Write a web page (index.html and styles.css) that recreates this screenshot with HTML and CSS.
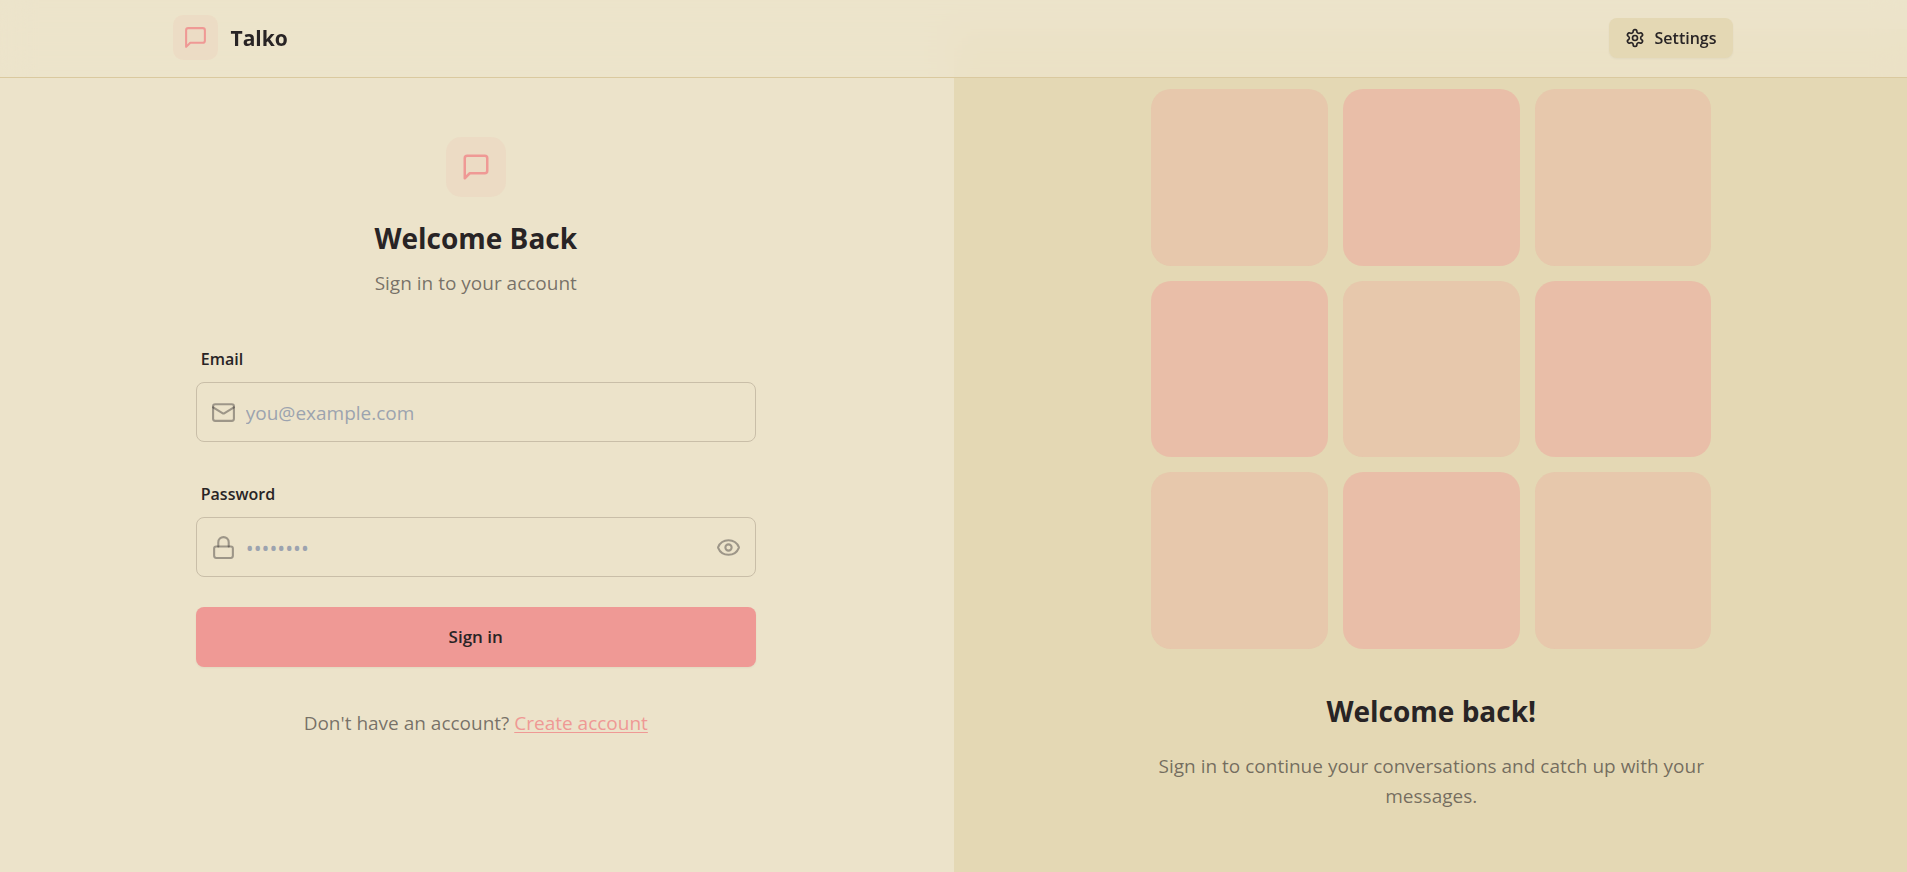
FILE: index.html
```html
<!DOCTYPE html>
<html lang="en">
<head>
<meta charset="utf-8">
<meta name="viewport" content="width=device-width, initial-scale=1">
<title>Talko</title>
<link rel="stylesheet" href="styles.css">
</head>
<body>
<header class="topbar">
  <div class="topbar-inner">
    <a class="brand" href="#">
      <span class="brand-mark"><svg class="icon" viewBox="0 0 24 24"><path d="M21 15a2 2 0 0 1-2 2H7l-4 4V5a2 2 0 0 1 2-2h14a2 2 0 0 1 2 2z"/></svg></span>
      <span class="brand-name">Talko</span>
    </a>
    <button class="settings" type="button">
      <svg class="icon icon-small" viewBox="0 0 24 24"><path d="M12.22 2h-.44a2 2 0 0 0-2 2v.18a2 2 0 0 1-1 1.73l-.43.25a2 2 0 0 1-2 0l-.15-.08a2 2 0 0 0-2.73.73l-.22.38a2 2 0 0 0 .73 2.73l.15.1a2 2 0 0 1 1 1.72v.51a2 2 0 0 1-1 1.74l-.15.09a2 2 0 0 0-.73 2.73l.22.38a2 2 0 0 0 2.73.73l.15-.08a2 2 0 0 1 2 0l.43.25a2 2 0 0 1 1 1.73V20a2 2 0 0 0 2 2h.44a2 2 0 0 0 2-2v-.18a2 2 0 0 1 1-1.73l.43-.25a2 2 0 0 1 2 0l.15.08a2 2 0 0 0 2.73-.73l.22-.39a2 2 0 0 0-.73-2.73l-.15-.08a2 2 0 0 1-1-1.74v-.5a2 2 0 0 1 1-1.74l.15-.09a2 2 0 0 0 .73-2.73l-.22-.38a2 2 0 0 0-2.73-.73l-.15.08a2 2 0 0 1-2 0l-.43-.25a2 2 0 0 1-1-1.73V4a2 2 0 0 0-2-2z"/><circle cx="12" cy="12" r="3"/></svg>
      <span>Settings</span>
    </button>
  </div>
</header>

<main class="page">
  <section class="signin">
    <div class="signin-content">
      <div class="intro">
        <span class="intro-mark"><svg class="icon icon-large" viewBox="0 0 24 24"><path d="M21 15a2 2 0 0 1-2 2H7l-4 4V5a2 2 0 0 1 2-2h14a2 2 0 0 1 2 2z"/></svg></span>
        <h1 class="title">Welcome Back</h1>
        <p class="copy">Sign in to your account</p>
      </div>
      <form class="form">
        <div class="field">
          <label class="label" for="email">Email</label>
          <div class="control">
            <svg class="icon" viewBox="0 0 24 24"><rect width="20" height="16" x="2" y="4" rx="2"/><path d="m22 7-8.97 5.7a1.94 1.94 0 0 1-2.06 0L2 7"/></svg>
            <input class="input" id="email" type="email" placeholder="you@example.com">
          </div>
        </div>
        <div class="field">
          <label class="label" for="password">Password</label>
          <div class="control">
            <svg class="icon" viewBox="0 0 24 24"><rect width="18" height="11" x="3" y="11" rx="2"/><path d="M7 11V7a5 5 0 0 1 10 0v4"/></svg>
            <input class="input input-password" id="password" type="password" placeholder="••••••••">
            <button class="reveal" type="button" aria-label="Show password"><svg class="icon" viewBox="0 0 24 24"><path d="M2.062 12.348a1 1 0 0 1 0-.696 10.75 10.75 0 0 1 19.876 0 1 1 0 0 1 0 .696 10.75 10.75 0 0 1-19.876 0"/><circle cx="12" cy="12" r="3"/></svg></button>
          </div>
        </div>
        <button class="submit" type="submit">Sign in</button>
      </form>
      <p class="copy signup">Don't have an account? <a class="link" href="#">Create account</a></p>
    </div>
  </section>

  <section class="pattern">
    <div class="pattern-content">
      <div class="tiles">
        <div class="tile"></div><div class="tile tile-strong"></div><div class="tile"></div>
        <div class="tile tile-strong"></div><div class="tile"></div><div class="tile tile-strong"></div>
        <div class="tile"></div><div class="tile tile-strong"></div><div class="tile"></div>
      </div>
      <h2 class="title">Welcome back!</h2>
      <p class="copy">Sign in to continue your conversations and catch up with your messages.</p>
    </div>
  </section>
</main>
</body>
</html>
```
FILE: styles.css
```css
:root {
  --base: #ece3ca;
  --panel: #e4d8b4;
  --ink: #282425;
  --primary: #ef9995;
}

* { box-sizing: border-box; }

body {
  margin: 0;
  background: var(--base);
  color: var(--ink);
  font: 19px/30px "Segoe UI", "Open Sans", "Noto Sans", sans-serif;
}

h1, h2, p { margin: 0; }

button, input { font: inherit; color: inherit; }

.icon {
  display: block;
  flex: none;
  width: 25px;
  height: 25px;
  fill: none;
  stroke: currentColor;
  stroke-width: 2;
  stroke-linecap: round;
  stroke-linejoin: round;
}
.icon-small { width: 20px; height: 20px; }
.icon-large { width: 30px; height: 30px; }

.topbar {
  position: fixed;
  inset: 0 0 auto;
  z-index: 1;
  border-bottom: 1px solid #dac99f;
  background: rgb(236 227 202 / 80%);
  backdrop-filter: blur(16px);
}
.topbar-inner {
  display: flex;
  align-items: center;
  justify-content: space-between;
  max-width: 1600px;
  margin: 0 auto;
  padding: 15px 21px 17px 19px;
}
.brand {
  display: flex;
  align-items: center;
  gap: 13px;
  color: inherit;
  text-decoration: none;
}
.brand-mark, .intro-mark {
  display: grid;
  place-items: center;
  background: rgb(239 153 149 / 10%);
  color: var(--primary);
}
.brand-mark { width: 45px; height: 45px; border-radius: 10px; }
.brand-name { font-size: 21px; font-weight: 700; }

.settings {
  display: flex;
  align-items: center;
  gap: 10px;
  height: 40px;
  padding: 0 16px;
  border: 0;
  border-radius: 8px;
  background: var(--panel);
  box-shadow: 0 1px 2px rgb(40 36 37 / 5%);
  font-size: 16px;
  font-weight: 600;
}

.page {
  display: grid;
  grid-template-columns: 1fr 1fr;
  min-height: 100vh;
  padding-top: 29px;
}
.signin, .pattern {
  display: flex;
  justify-content: center;
  padding: 60px 40px 50px;
}
.signin { padding: 108px 42px 50px 40px; }
.pattern { padding-left: 42px; background: var(--panel); text-align: center; }
.signin-content, .pattern-content { width: 100%; max-width: 560px; }

.intro {
  display: flex;
  flex-direction: column;
  align-items: center;
}
.intro-mark {
  width: 60px;
  height: 60px;
  margin-bottom: 21px;
  border-radius: 15px;
}
.title { font-size: 28px; line-height: 40px; font-weight: 700; }
.copy { color: rgb(40 36 37 / 60%); }
.intro .copy { margin-top: 10px; }

.form {
  display: flex;
  flex-direction: column;
  gap: 30px;
  margin-top: 44px;
}
.field + .field { margin-top: 5px; }
.label {
  display: block;
  padding: 5px 5px 10px;
  font-size: 16px;
  line-height: 25px;
  font-weight: 600;
}
.control {
  display: flex;
  align-items: center;
  gap: 10px;
  height: 60px;
  padding: 0 14px;
  border: 1px solid #c9bea8;
  border-radius: 8px;
}
.control .icon { color: rgb(40 36 37 / 40%); }
.input {
  flex: 1;
  min-width: 0;
  height: 56px;
  padding: 2px 0 0;
  border: 0;
  outline: 0;
  background: transparent;
}
.input-password { font-size: 21px; }
.input::placeholder { color: #9ca3af; opacity: 1; }
.reveal { padding: 0; border: 0; background: none; }
.submit {
  height: 60px;
  border: 0;
  border-radius: 8px;
  background: var(--primary);
  box-shadow: 0 1px 2px rgb(40 36 37 / 5%);
  font-size: 17px;
  font-weight: 600;
}
.signup { margin-top: 41px; text-align: center; }
.link { color: var(--primary); text-underline-offset: 2px; }

.tiles {
  display: grid;
  grid-template-columns: repeat(3, 1fr);
  gap: 15px;
  margin-bottom: 42px;
}
.tile {
  aspect-ratio: 1;
  border-radius: 20px;
  background: rgb(239 153 149 / 25%);
}
.tile-strong { background: rgb(239 153 149 / 40%); }
.pattern .copy { margin-top: 20px; }
```
